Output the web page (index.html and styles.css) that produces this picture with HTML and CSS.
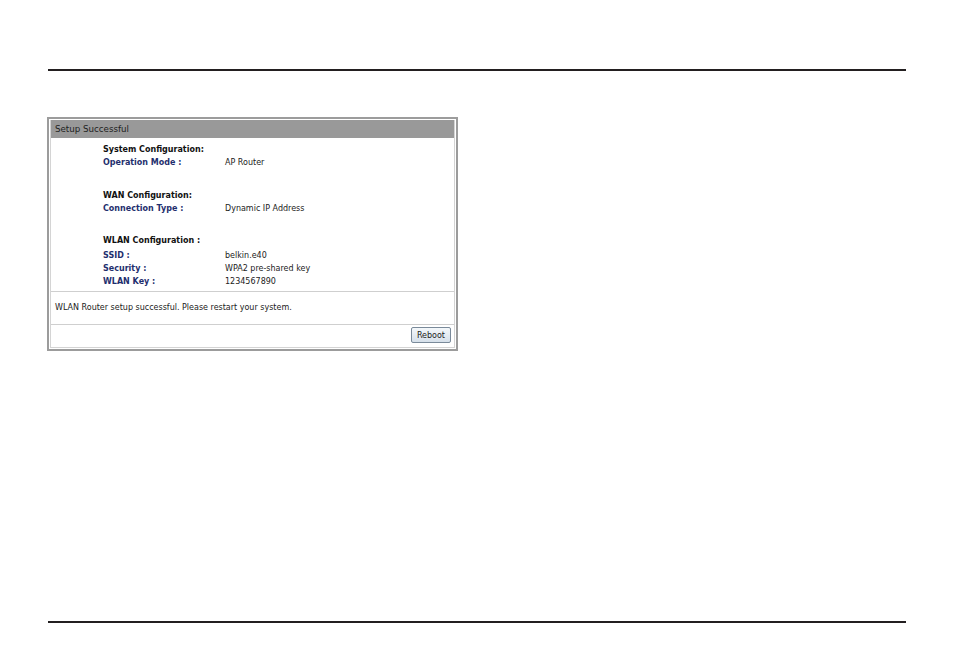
FILE: index.html
```html
<!DOCTYPE html>
<html lang="en">
<head>
  <meta charset="UTF-8">
  <title>Setup Successful</title>
  <link rel="stylesheet" href="styles.css">
</head>
<body>

  <div class="rule top"></div>

  <div class="panel">
    <div class="inner">
      <div class="title">Setup Successful</div>

      <div class="config">
        <div class="section">
          <div class="head">System Configuration:</div>
          <div class="row"><span class="label">Operation Mode :</span><span>AP Router</span></div>
        </div>

        <div class="section">
          <div class="head">WAN Configuration:</div>
          <div class="row"><span class="label">Connection Type :</span><span>Dynamic IP Address</span></div>
        </div>

        <div class="section wlan">
          <div class="head">WLAN Configuration :</div>
          <div class="row"><span class="label">SSID :</span><span>belkin.e40</span></div>
          <div class="row"><span class="label">Security :</span><span>WPA2 pre-shared key</span></div>
          <div class="row"><span class="label">WLAN Key :</span><span>1234567890</span></div>
        </div>
      </div>

      <div class="message">WLAN Router setup successful. Please restart your system.</div>

      <div class="actions">
        <button class="btn">Reboot</button>
      </div>
    </div>
  </div>

  <div class="rule bottom"></div>

</body>
</html>
```

FILE: styles.css
```css
body {
  margin: 0;
  background: #fff;
  font-family: "DejaVu Sans", Verdana, sans-serif;
  font-size: 8px;
  color: #222;
}
.rule {
  margin-left: 48px;
  width: 858px;
  border-top: 2px solid #231f20;
}
.rule.top {
  margin-top: 69px;
}
.rule.bottom {
  margin-top: 270px;
}
.panel {
  margin: 46px 0 0 47px;
  width: 405px;
  border: 2px solid #9c9c9c;
  padding: 1px;
  background: #fff;
}
.inner {
  border: 1px solid #d4d4d4;
  border-top: none;
}
.title {
  background: #999;
  color: #1e1e1e;
  height: 18px;
  line-height: 18px;
  padding-left: 4px;
  font-size: 8.7px;
}
.config {
  padding: 5px 0 3px 52px;
  border-bottom: 1px solid #cfcfcf;
}
.section {
  margin-bottom: 20px;
}
.section + .section {
  margin-bottom: 19px;
}
.section.wlan {
  margin-bottom: 0;
}
.head, .row {
  line-height: 13px;
}
.head {
  font-weight: bold;
  color: #111;
}
.wlan .head {
  margin-bottom: 2px;
}
.row {
  display: flex;
}
.label {
  width: 122px;
  font-weight: bold;
  color: #1f2f6e;
}
.message {
  height: 32px;
  line-height: 32px;
  padding-left: 4px;
  border-bottom: 1px solid #cfcfcf;
}
.actions {
  display: flex;
  justify-content: flex-end;
  padding: 2px 3px 4px;
}
.btn {
  font-family: "DejaVu Sans", Verdana, sans-serif;
  font-size: 8px;
  color: #222;
  height: 16px;
  padding: 0 5px;
  border: 1px solid #7a8a9a;
  border-radius: 2px;
  background: linear-gradient(#f4f8fb, #d6e0ea);
}
```
